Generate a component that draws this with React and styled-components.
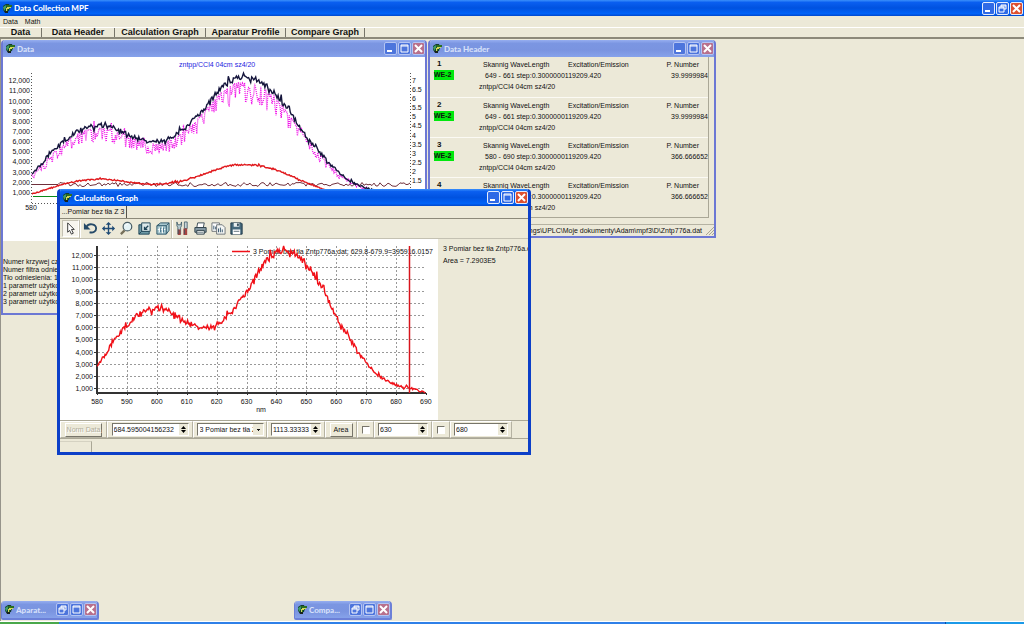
import React, { useState } from 'react';
import styled, { createGlobalStyle, css } from 'styled-components';

const GlobalStyle = createGlobalStyle`
  * {
    box-sizing: border-box;
  }

  body {
    margin: 0;
    background: #ece9d8;
    color: #111;
    font: 7px/10px "Liberation Sans", Arial, sans-serif;
  }

  button, input, select {
    font: inherit;
    color: inherit;
    margin: 0;
    padding: 0;
  }

  text {
    font: 7px "Liberation Sans", Arial, sans-serif;
    fill: #111;
  }
`;

// ---------- spectrum data ----------

const KNOTS = [
  [580, 3000], [585, 4700], [590, 6250], [595, 7300], [600, 7650], [605, 7300],
  [610, 6550], [615, 6050], [620, 6300], [625, 7350], [630, 9000], [635, 11000],
  [640, 12250], [645, 12300], [650, 11300], [655, 9400], [660, 7000], [665, 4950],
  [670, 3150], [675, 1950], [680, 1350], [685, 1050], [690, 700],
];

function noise(seed) {
  let s = seed;
  return () => {
    s = (s * 16807) % 2147483647;
    return s / 2147483647;
  };
}

function intensity(nm) {
  const i = Math.min(KNOTS.length - 2, Math.floor((nm - 580) / 5));
  const t = (nm - KNOTS[i][0]) / 5;
  const at = (n) => KNOTS[Math.max(0, Math.min(KNOTS.length - 1, n))][1];
  const [a, b, c, d] = [at(i - 1), at(i), at(i + 1), at(i + 2)];
  return b + 0.5 * t * (c - a + t * (2 * a - 5 * b + 4 * c - d + t * (3 * (b - c) + d - a)));
}

function trace(seed, toX, toY, spread) {
  const rnd = noise(seed);
  const pts = [];
  for (let nm = 580; nm <= 690; nm += 0.3) {
    const v = intensity(nm);
    const value = Math.min(12800, v + spread(v, rnd));
    pts.push(`${toX(nm).toFixed(1)},${toY(value).toFixed(1)}`);
  }
  return pts.join(' ');
}

const wobble = (v, rnd) => (rnd() - 0.5) * Math.sqrt(v) * (rnd() > 0.88 ? 13 : 5);
const drop = (v, rnd) => -v * (rnd() > 0.4 ? 0.03 + 0.18 * rnd() : 0.04) + (rnd() > 0.96 ? v * 0.1 : 0);

// ---------- icons ----------

const AppIcon = () => (
  <svg width="11" height="11" viewBox="0 0 11 11" aria-hidden="true">
    <path d="M1 3 4 1h3l1 3-1 4-4 1-2-2z" fill="#123c2c" />
    <path d="M1 4 4 2v3L2 8z" fill="#3f9c6a" />
    <path d="M4 2h6v2H8v2H6v4H4V6h1z" fill="#2a6f22" />
    <path d="M5 4h4v1H7v1H5v2H4V5h1z" fill="#d5d75a" />
    <path d="M2 8h4v2H3z" fill="#18241c" />
  </svg>
);

const glyphs = {
  minimize: <path d="M3 8h5v2H3z" fill="#fff" />,
  maximize: <path d="M3 3h7v7H3zM3 4h7" fill="none" stroke="#fff" />,
  restore: <path d="M5 5V3h5v4H8M3 5h5v5H3zM3 6h5M5 4h5" fill="none" stroke="#fff" />,
  close: <path d="m3 3 7 7M10 3l-7 7" stroke="#fff" strokeWidth="2" />,
};

const toolIcons = {
  pointer: <path d="M5 2v10l2-2 2 4 2-1-2-4h3z" fill="#fff" stroke="#333" />,
  undo: (
    <>
      <path d="M4 6c2-4 10-3 10 2 0 3-3 5-7 4" fill="none" stroke="#254a68" strokeWidth="2" />
      <path d="M1 2v7h7z" fill="#254a68" />
    </>
  ),
  move: (
    <>
      <path d="M8 3v10M3 8h10" stroke="#1e4a75" strokeWidth="1.5" />
      <path d="m8 1 3 3H5zM8 15l3-3H5zM1 8l3-3v6zM15 8l-3-3v6z" fill="#1e4a75" />
    </>
  ),
  zoom: (
    <>
      <path d="m6 10-4 4" stroke="#76705a" strokeWidth="2.4" />
      <circle cx="9" cy="6" r="4.600" fill="#e5f4f6" stroke="#4b5f66" strokeWidth="1.3" />
      <path d="M7 5c0-1 1-2 3-2" fill="none" stroke="#fff" />
    </>
  ),
  depth: (
    <>
      <path d="M2 4h3v7h8v3H2z" fill="#6f9aa6" stroke="#1f4558" />
      <path d="M5 2h9v9H5z" fill="#dce9ea" stroke="#1f4558" />
      <path d="m2 14 3-3" fill="none" stroke="#1f4558" />
      <path d="m12 5-4 4M8 6v3h3" fill="none" stroke="#1f4558" strokeWidth="1.4" />
    </>
  ),
  cube: (
    <>
      <path d="m2 5 4-3h9v8l-3 4H2z" fill="#a8c8cf" stroke="#2b5468" />
      <path d="M2 5h10v9M12 5l3-3" fill="none" stroke="#2b5468" />
      <path d="M5 7v5M8 6v7M3 9h8" stroke="#fff" />
      <path d="M6 7v5M9 7v5" stroke="#3a6a84" />
    </>
  ),
  tools: (
    <>
      <path d="M2 1v4l1 2v7h3V7l1-2V1L6 4H3z" fill="#b8cad0" stroke="#32505f" strokeWidth=".8" />
      <path d="M10 1h3v7h-3z" fill="#c7d3d7" stroke="#32505f" strokeWidth=".8" />
      <path d="M9 8h4v7H9zM3 9h3v6H3z" fill="#a64340" />
      <path d="M10 9v5M4 9v5" stroke="#32505f" strokeWidth=".8" />
    </>
  ),
  print: (
    <>
      <path d="M5 2h7l-1 5H4z" fill="#fff" stroke="#394a54" />
      <path d="M2 7h12v5H2z" fill="#8ba0aa" stroke="#2c3e48" />
      <path d="M4 10h8v4H4z" fill="#eef1ee" stroke="#2c3e48" />
      <path d="M4 12h7" stroke="#6d7f88" />
    </>
  ),
  pages: (
    <>
      <path d="M1 2h8v9H1z" fill="#fff" stroke="#6c7276" />
      <path d="M6 4h6l3 3v7H6z" fill="#f4f6f4" stroke="#6c7276" />
      <path d="M3 9V5M5 9V6M8 12V8M10 12V7M12 12V9" stroke="#33536c" />
    </>
  ),
  save: (
    <>
      <path d="M2 2h11l1 1v11H2z" fill="#45697c" stroke="#1b3444" />
      <path d="M5 2h6v4H5z" fill="#e8eeee" />
      <path d="M4 9h8v5H4z" fill="#fff" />
      <path d="M9 3h1v2H9zM5 11h6" fill="#1b3444" stroke="#1b3444" strokeWidth=".7" />
    </>
  ),
};

// ---------- window frame ----------

function TitleBar({ title, active, main, buttons = ['minimize', 'maximize', 'close'] }) {
  return (
    <Title $active={active} $main={main}>
      <AppIcon />
      <Caption $active={active}>{title}</Caption>
      {buttons.map((name) => (
        <CaptionButton key={name} aria-label={`${name} ${title}`} $close={name === 'close'} $active={active}>
          <svg width="13" height="13" viewBox="0 0 13 13">{glyphs[name]}</svg>
        </CaptionButton>
      ))}
    </Title>
  );
}

function Spin({ label, start, width }) {
  const [value, setValue] = useState(start);
  const step = (n) => setValue(String(Number(value) + n));
  return (
    <Field $width={width}>
      <FieldInput aria-label={label} value={value} onChange={(e) => setValue(e.target.value)} />
      <Arrows>
        <ArrowButton aria-label={`${label} up`} onClick={() => step(1)}>
          <svg width="7" height="4" viewBox="0 0 7 4"><path d="M1 4h5L3.500 1z" /></svg>
        </ArrowButton>
        <ArrowButton aria-label={`${label} down`} onClick={() => step(-1)}>
          <svg width="7" height="4" viewBox="0 0 7 4"><path d="M1 0h5L3.500 3z" /></svg>
        </ArrowButton>
      </Arrows>
    </Field>
  );
}

// ---------- charts ----------

function DataChart() {
  const x = (nm) => 29 + (nm - 580) * 3.39;
  const y = (v) => 146 - v * 0.01015;
  const rnd = noise(77);
  const flat = [];
  for (let px = 29; px <= 408; px += 2) flat.push(`${px},${(127.5 + (px > 55 ? (rnd() - 0.5) * 4 : 0)).toFixed(1)}`);
  return (
    <svg width="422" height="184" viewBox="0 0 422 184" role="img" aria-label="Data">
      <text x="176" y="10" style={{ fill: '#2424e0' }}>zntpp/CCl4 04cm sz4/20</text>
      {Array.from({ length: 12 }, (_, i) => (
        <text key={i} x="27" y={y((i + 1) * 1000) + 2} textAnchor="end">{`${i + 1},000`}</text>
      ))}
      {Array.from({ length: 12 }, (_, i) => (
        <text key={i} x="409" y={126 - i * 9.1}>{1.5 + i * 0.5}</text>
      ))}
      <path d="M28.500 16v131M29 146.500h380M407.500 16v131" stroke="#555" strokeDasharray="1 2" />
      <text x="28" y="153" textAnchor="middle">580</text>
      <path d="M30 139.500h380" stroke="#0a8a1a" />
      <polyline points={flat.join(' ')} fill="none" stroke="#70303c" />
      <polyline points={trace(5, x, (v) => 146 - v * 0.0031, wobble)} fill="none" stroke="#e0181c" strokeWidth="1.4" />
      <polyline points={trace(41, x, y, drop)} fill="none" stroke="#f010e8" strokeWidth="1.3" strokeDasharray="1 1" />
      <polyline points={trace(12, x, y, wobble)} fill="none" stroke="#15153c" strokeWidth="1.4" />
    </svg>
  );
}

function CalculationChart() {
  const x = (nm) => 37 + (nm - 580) * 2.99;
  const y = (v) => 162 - v * 0.01212;
  return (
    <svg width="378" height="181" viewBox="0 0 378 181" role="img" aria-label="Calculation graph">
      {Array.from({ length: 12 }, (_, i) => (
        <g key={i}>
          <path d={`M38 ${Math.round(y((i + 1) * 1000)) - 0.5}h328`} stroke="#999" strokeDasharray="2 2" />
          <path d={`M34 ${Math.round(y((i + 1) * 1000)) - 0.5}h3`} stroke="#333" />
          <text x="33" y={y((i + 1) * 1000) + 2} textAnchor="end">{`${i + 1},000`}</text>
        </g>
      ))}
      {Array.from({ length: 12 }, (_, i) => (
        <g key={i}>
          {i > 0 && i < 11 && (
            <path d={`M${Math.round(x(580 + i * 10)) + 0.5} 7v147`} stroke="#999" strokeDasharray="2 2" />
          )}
          <path d={`M${Math.round(x(580 + i * 10)) + 0.5} 154v2`} stroke="#333" />
          <text x={x(580 + i * 10)} y="165" textAnchor="middle">{580 + i * 10}</text>
        </g>
      ))}
      <path d="M37 7v147h329" fill="none" stroke="#333" strokeWidth="2" />
      <text x="201" y="173" textAnchor="middle">nm</text>
      <path d="M172 12.500h18" stroke="#f01018" strokeWidth="1.4" />
      <text x="193" y="15">3 Pomiar bez tła Zntp776a.dat; 629.8-679.9=395916.0157</text>
      <polyline points={trace(12, x, y, wobble)} fill="none" stroke="#f01018" strokeWidth="1.4" />
      <path d="M349.500 7v147" stroke="#d8141c" strokeWidth="1.5" />
    </svg>
  );
}

// ---------- content ----------

const scans = [
  { id: 1, range: '649 - 661 step:0.3000000119209.420', number: '39.9999984' },
  { id: 2, range: '649 - 661 step:0.3000000119209.420', number: '39.9999984' },
  { id: 3, range: '580 - 690 step:0.3000000119209.420', number: '366.666652' },
  { id: 4, range: '580 - 690 step:0.3000000119209.420', number: '366.666652' },
];

const notes = [
  'Numer krzywej czu',
  'Numer filtra odniesi',
  'Tło odniesienia: 11',
  '1 parametr użytkow',
  '2 parametr użytkow',
  '3 parametr użytkow',
];

const sections = [
  ['Data', 42],
  ['Data Header', 73],
  ['Calculation Graph', 91],
  ['Aparatur Profile', 80],
  ['Compare Graph', 79],
];

function App() {
  return (
    <Page>
      <GlobalStyle />
      <TitleBar title="Data Collection MPF" active main buttons={['minimize', 'restore', 'close']} />
      <MenuBar>
        <MenuItem>Data</MenuItem>
        <MenuItem>Math</MenuItem>
      </MenuBar>
      <SectionBar>
        {sections.map(([name, width]) => (
          <SectionButton key={name} $width={width}>{name}</SectionButton>
        ))}
      </SectionBar>

      <Desktop>
        <Window $left={1} $top={1} $width={426}>
          <TitleBar title="Data" />
          <Paper><DataChart /></Paper>
          <Notes>
            {notes.map((line) => <NoteLine key={line}>{line}</NoteLine>)}
          </Notes>
        </Window>

        <Window $left={428} $top={1} $width={288}>
          <TitleBar title="Data Header" />
          <Scans>
            {scans.map((scan) => (
              <Scan key={scan.id}>
                <ScanSide>
                  <ScanId>{scan.id}</ScanId>
                  <Badge>WE-2</Badge>
                </ScanSide>
                <ScanBody>
                  <ScanLine $indent={4}>
                    <ScanKind>Skannig WaveLength</ScanKind>
                    <span>Excitation/Emission</span>
                    <ScanNumber $inset={9}>P. Number</ScanNumber>
                  </ScanLine>
                  <ScanLine $indent={6}>
                    <span>{scan.range}</span>
                    <ScanNumber>{scan.number}</ScanNumber>
                  </ScanLine>
                  <ScanLine>zntpp/CCl4 04cm sz4/20</ScanLine>
                </ScanBody>
              </Scan>
            ))}
          </Scans>
          <PathBar>
            <span>ettings\UPLC\Moje dokumenty\Adam\mpf3\D\Zntp776a.dat</span>
            <svg width="8" height="8" viewBox="0 0 8 8" aria-hidden="true">
              <path d="M0 8 8 0M3 8l5-5M6 8l2-2" stroke="#aaa692" />
            </svg>
          </PathBar>
        </Window>

        <Window $left={57} $top={150} $width={474} $active>
          <TitleBar title="Calculation Graph" active />
          <Tabs><Tab>...Pomiar bez tła Z 3</Tab></Tabs>
          <Tools>
            {Object.keys(toolIcons).map((name) => (
              <React.Fragment key={name}>
                <Tool aria-label={name} $pressed={name === 'pointer'}>
                  <svg width="15" height="15" viewBox="0 0 16 16">{toolIcons[name]}</svg>
                </Tool>
                {(name === 'pointer' || name === 'cube') && <Divider />}
              </React.Fragment>
            ))}
          </Tools>
          <Split>
            <CalculationChart />
            <Result>
              <ResultLine>3 Pomiar bez tła Zntp776a.da</ResultLine>
              <ResultLine>Area = 7.2903E5</ResultLine>
            </Result>
          </Split>
          <Controls>
            <Group $width={47}><PushButton disabled $width={37}>Norm Data</PushButton></Group>
            <Group $width={86}><Spin label="Position" start="684.595004156232" width={77} /></Group>
            <Group $width={74}>
              <Select aria-label="Curve" defaultValue="3">
                <option value="3">3 Pomiar bez tła Z</option>
              </Select>
            </Group>
            <Group $width={58}><Spin label="Value" start="1113.33333" width={50} /></Group>
            <Group $width={32}><PushButton $width={23}>Area</PushButton></Group>
            <Group $width={17}><Check type="checkbox" aria-label="Lower limit" /></Group>
            <Group $width={58}><Spin label="From" start="630" width={50} /></Group>
            <Group $width={18}><Check type="checkbox" aria-label="Upper limit" /></Group>
            <Group $width={62}><Spin label="To" start="680" width={54} /></Group>
          </Controls>
          <StatusBar><StatusCell /></StatusBar>
        </Window>

        <Minimized $left={1}>
          <TitleBar title="Aparat..." buttons={['restore', 'maximize', 'close']} />
        </Minimized>
        <Minimized $left={294}>
          <TitleBar title="Compa..." buttons={['restore', 'maximize', 'close']} />
        </Minimized>
      </Desktop>
      <TaskEdge>
        <StartEdge />
        <TrayEdge />
      </TaskEdge>
    </Page>
  );
}

export default App;

const Page = styled.div`
  display: flex;
  flex-direction: column;
  min-height: 100vh;
  overflow: hidden;
`;

const Title = styled.header`
  display: flex;
  align-items: center;
  gap: 1px;
  height: ${(p) => (p.$main ? 16 : 17)}px;
  padding: 0 ${(p) => (p.$main ? 1 : 0)}px 0 2px;
  background: ${(p) =>
    p.$active
      ? 'linear-gradient(#3b90fb 0, #0a5ff0 15%, #0052e0 50%, #0063f8 85%, #0048cc 100%)'
      : 'linear-gradient(#96aef0 0, #7b96e2 20%, #7a94e0 60%, #86a2ea 100%)'};
`;

const Caption = styled.span`
  flex: 1;
  min-width: 0;
  font: 900 8px/12px Lato, "Open Sans", sans-serif;
  white-space: nowrap;
  color: ${(p) => (p.$active ? '#fff' : '#d6e0fa')};
`;

const CaptionButton = styled.button`
  display: flex;
  width: 13px;
  height: 13px;
  border: 1px solid ${(p) => (p.$active ? '#e4ecfc' : '#b4c4f2')};
  border-radius: 2px;
  background: ${(p) =>
    p.$close ? (p.$active ? '#dd5030' : '#b8708c') : p.$active ? '#2f6ae6' : '#4d75dc'};

  svg {
    flex: none;
    margin: -1px;
  }
`;

const MenuBar = styled.nav`
  display: flex;
  gap: 7px;
  height: 11px;
  padding-left: 3px;
`;

const MenuItem = styled.button`
  border: 0;
  background: none;
`;

const SectionBar = styled.nav`
  display: flex;
  height: 12px;
  border-top: 1px solid #fff;
  border-bottom: 2px solid #8c897a;
`;

const SectionButton = styled.button`
  width: ${(p) => p.$width}px;
  border: 0;
  border-right: 1px solid #77756a;
  background: none;
  font: bold 9px/9px "Liberation Sans", Arial, sans-serif;
  white-space: nowrap;
`;

const Desktop = styled.main`
  position: relative;
  flex: 1;
  min-height: 480px;
  border-left: 1px solid #96948a;
  overflow: hidden;
`;

const Window = styled.section`
  position: absolute;
  left: ${(p) => p.$left - 1}px;
  top: ${(p) => p.$top}px;
  width: ${(p) => p.$width}px;
  border: solid ${(p) => (p.$active ? '#0c3fc8' : '#6c78d4')};
  border-width: ${(p) => (p.$active ? '0 3px 3px' : '0 2px 2px')};
  border-radius: 4px 4px 0 0;
  background: #ece9d8;
  overflow: hidden;
`;

const Minimized = styled.section`
  position: absolute;
  left: ${(p) => p.$left - 1}px;
  bottom: 1px;
  width: 98px;
  border: solid #6c80d8;
  border-width: 0 2px 2px 1px;
  border-radius: 4px 4px 2px 2px;
  overflow: hidden;
`;

const Paper = styled.div`
  height: 184px;
  background: #fff;
`;

const Notes = styled.div`
  padding: 17px 0 7px;
`;

const NoteLine = styled.div`
  line-height: 8px;
  white-space: nowrap;
`;

const Scans = styled.div`
  margin-right: 5px;
  border: solid #aaa796;
  border-width: 0 1px 1px 0;
`;

const Scan = styled.article`
  display: flex;
  height: 40px;
  padding-top: 2px;

  & + & {
    border-top: 1px solid #fbfaf4;
  }
`;

const ScanSide = styled.div`
  width: 49px;
  padding-left: 4px;
`;

const ScanId = styled.div`
  padding-left: 3px;
  font: bold 8px/10px "Liberation Sans", Arial, sans-serif;
`;

const Badge = styled.div`
  width: 20px;
  height: 10px;
  margin-top: 1px;
  background: #00e80c;
  font: bold 7px/10px "Liberation Sans", Arial, sans-serif;
`;

const ScanBody = styled.div`
  flex: 1;
`;

const ScanLine = styled.div`
  display: flex;
  padding-left: ${(p) => p.$indent || 0}px;
  margin-top: 1px;
  white-space: nowrap;
`;

const ScanKind = styled.span`
  width: 85px;
`;

const ScanNumber = styled.span`
  margin-left: auto;
  margin-right: ${(p) => p.$inset || 0}px;
`;

const PathBar = styled.footer`
  display: flex;
  justify-content: flex-end;
  align-items: center;
  gap: 4px;
  height: 12px;
  margin-top: 6px;
  border-top: 1px solid #b5b2a2;
  white-space: nowrap;
`;

const Tabs = styled.div`
  display: flex;
  height: 13px;
  border-bottom: 1px solid #8c897a;
`;

const Tab = styled.button`
  width: 67px;
  border: 0;
  border-right: 1px solid #55534a;
  background: none;
  white-space: nowrap;
`;

const Tools = styled.div`
  display: flex;
  align-items: center;
  height: 20px;
  padding-left: 2px;
  border-bottom: 1px solid #c4c1b2;
`;

const Tool = styled.button`
  display: flex;
  align-items: center;
  justify-content: center;
  width: ${(p) => (p.$pressed ? 17 : 18)}px;
  height: 17px;
  border: 0;
  background: none;

  svg {
    flex: none;
  }

  ${(p) => p.$pressed && css`
    border: 1px solid;
    border-color: #c4c1b2 #fff #fff #c4c1b2;
    background: #f7f5ee;
  `}
`;

const Divider = styled.div`
  width: 2px;
  height: 18px;
  border-left: 1px solid #c4c1b2;
  border-right: 1px solid #fff;
`;

const Split = styled.div`
  display: flex;
  height: 181px;

  > svg {
    flex: none;
    background: #fff;
  }
`;

const Result = styled.aside`
  flex: 1;
  min-width: 0;
  padding: 5px 0 0 5px;
`;

const ResultLine = styled.div`
  margin-bottom: 2px;
  white-space: nowrap;
`;

const Controls = styled.div`
  display: flex;
  height: 19px;
  border-top: 1px solid #aaa796;
  border-bottom: 1px solid #aaa796;
`;

const Group = styled.div`
  display: flex;
  align-items: center;
  justify-content: center;
  width: ${(p) => p.$width}px;
  border: 1px solid;
  border-color: #fff #b5b2a2 #b5b2a2 #fff;
`;

const bevel = css`
  border: 1px solid;
  border-color: #fff #77756a #77756a #fff;
  background: #ece9d8;
`;

const sunken = css`
  border: 1px solid;
  border-color: #77756a #fff #fff #77756a;
  background: #fff;
`;

const PushButton = styled.button`
  ${bevel}
  width: ${(p) => p.$width}px;
  height: 14px;
  white-space: nowrap;

  &:disabled {
    color: #b0ad9c;
    text-shadow: 1px 1px #fff;
  }
`;

const Field = styled.div`
  ${sunken}
  display: flex;
  width: ${(p) => p.$width}px;
  height: 13px;
`;

const FieldInput = styled.input`
  flex: 1;
  min-width: 0;
  padding-left: 1px;
  border: 0;
  outline: 0;
  background: none;
`;

const Arrows = styled.div`
  display: flex;
  flex-direction: column;
  width: 9px;
`;

const ArrowButton = styled.button`
  display: flex;
  flex: 1;
  align-items: center;
  justify-content: center;
  min-height: 0;
  border: 0;
  background: #ece9d8;
`;

const Select = styled.select`
  ${sunken}
  width: 67px;
  height: 13px;
  padding: 0 10px 0 2px;
  appearance: none;
  border-radius: 0;
  background:
    linear-gradient(#111, #111) right 3px top 5px / 3px 1px no-repeat,
    linear-gradient(#111, #111) right 4px top 6px / 1px 1px no-repeat,
    linear-gradient(#ece9d8, #ece9d8) right / 10px 100% no-repeat,
    #fff;
`;

const Check = styled.input`
  ${sunken}
  appearance: none;
  width: 8px;
  height: 8px;
`;

const StatusBar = styled.footer`
  display: flex;
  height: 13px;
  padding: 2px 0 0;
`;

const StatusCell = styled.div`
  width: 32px;
  border-top: 1px solid #d5d2c2;
  border-right: 1px solid #aaa796;
`;

const TaskEdge = styled.footer`
  display: flex;
  justify-content: space-between;
  height: 3px;
  border-top: 1px solid #fff;
  background: #2f80e8;
`;

const StartEdge = styled.div`
  width: 59px;
  background: #4aa84a;
`;

const TrayEdge = styled.div`
  width: 79px;
  border-left: 1px solid #0b4fa8;
  background: #1b9ae8;
`;
